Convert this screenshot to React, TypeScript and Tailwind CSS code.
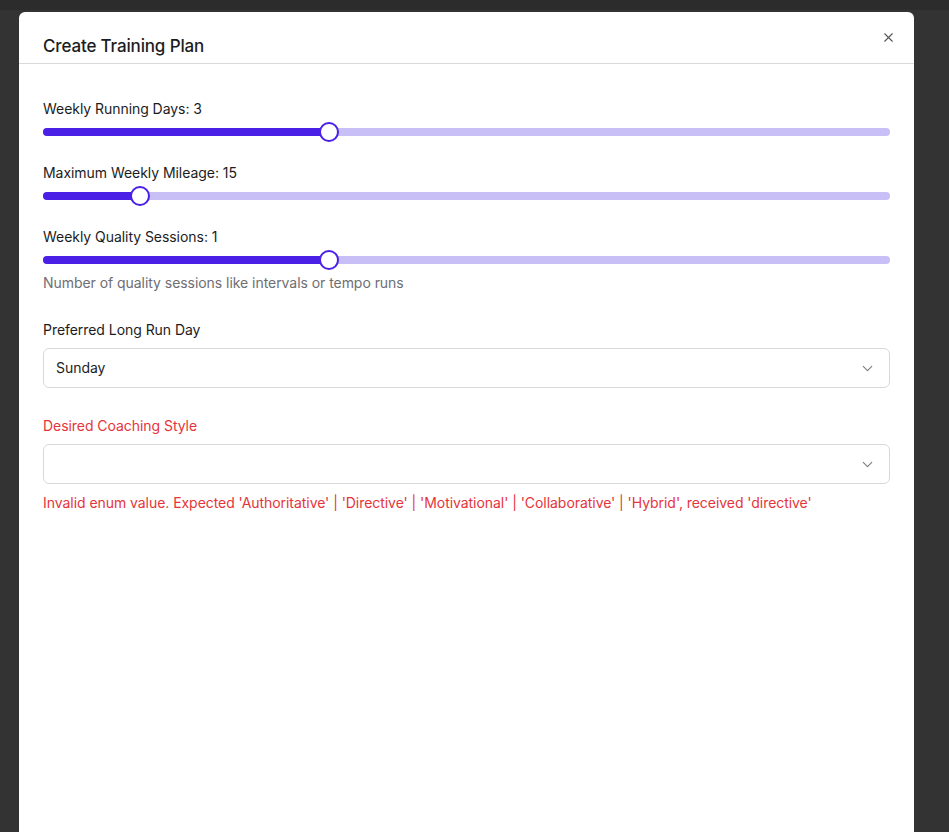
import { ChevronDown, X } from 'lucide-react'

interface SliderProps {
  label: string
  value: number
  min: number
  max: number
  hint?: string
}

function PlanSlider({ label, value, min, max, hint }: SliderProps) {
  const pct = (value - min) / (max - min)
  return (
    <div>
      <div className="text-sm leading-5 text-[#1c1c1e]">{label}: {value}</div>
      <div className="relative mt-[3px] h-5">
        <div className="absolute left-0 right-0 top-[6px] h-2 rounded-full bg-[#c8bff6]" />
        <div
          className="absolute left-0 top-[6px] h-2 rounded-l-full bg-[#4a1fe6]"
          style={{ width: `calc(10px + (100% - 20px) * ${pct})` }}
        />
        <div
          className="absolute top-0 h-5 w-5 rounded-full border-2 border-[#4a1fe6] bg-white"
          style={{ left: `calc((100% - 20px) * ${pct})` }}
        />
      </div>
      {hint && <div className="mt-[3px] text-sm leading-5 text-[#6e6e73]">{hint}</div>}
    </div>
  )
}

function SelectBox({ value }: { value: string }) {
  return (
    <div className="mt-2 flex h-10 items-center justify-between rounded-md border border-[#d8d8d8] bg-white pl-3 pr-[13px]">
      <span className="text-sm text-[#1c1c1e]">{value}</span>
      <ChevronDown size={17} strokeWidth={1.5} className="text-[#7a7a7a]" />
    </div>
  )
}

export default function App() {
  return (
    <div className="h-[832px] overflow-hidden bg-[#333333] font-['Inter',_'Liberation_Sans',_sans-serif] tracking-[-0.05px]">
      <div className="h-[10px] bg-[#2c2c2c]" />
      <div className="pl-[19px] pt-[2px]">
        <div className="relative h-[900px] w-[895px] rounded-t-md bg-white">
          <div className="border-b border-[#d9d9d9] px-6 pt-5 pb-[3px]">
            <h2 className="text-[17px] font-medium leading-7 tracking-[-0.15px] text-[#1c1c1e]">Create Training Plan</h2>
          </div>
          <button className="absolute right-[18px] top-[18px] text-[#555]">
            <X size={15} strokeWidth={1.75} />
          </button>

          <div className="px-6 pt-[35px]">
            <div className="flex flex-col gap-[21px]">
              <PlanSlider label="Weekly Running Days" value={3} min={1} max={7} />
              <PlanSlider label="Maximum Weekly Mileage" value={15} min={5} max={100} />
              <PlanSlider
                label="Weekly Quality Sessions"
                value={1}
                min={0}
                max={3}
                hint="Number of quality sessions like intervals or tempo runs"
              />
            </div>

            <div className="mt-[27px]">
              <div className="text-sm leading-5 text-[#1c1c1e]">Preferred Long Run Day</div>
              <SelectBox value="Sunday" />
            </div>

            <div className="mt-[28px]">
              <div className="text-sm leading-5 text-[#e5343a]">Desired Coaching Style</div>
              <SelectBox value="" />
              <div className="mt-[9px] text-sm leading-5 text-[#e5343a]">
                Invalid enum value. Expected 'Authoritative' | 'Directive' | 'Motivational' | 'Collaborative' | 'Hybrid', received 'directive'
              </div>
            </div>
          </div>
        </div>
      </div>
    </div>
  )
}
